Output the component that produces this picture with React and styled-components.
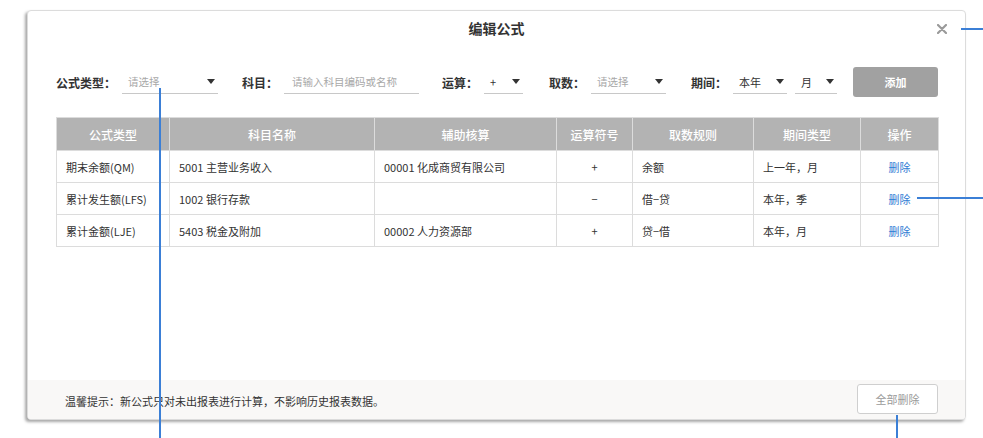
import React from 'react';
import styled, { createGlobalStyle } from 'styled-components';

const GlobalStyle = createGlobalStyle`
  html, body {
    margin: 0;
    padding: 0;
    background: #fff;
    font-family: "Noto Sans CJK SC", "Noto Sans", "Liberation Sans", sans-serif;
    color: #333;
  }
`;

const Page = styled.div`
  position: relative;
  width: 983px;
  height: 438px;
  overflow: hidden;
  padding: 10px 0 0 27px;
  box-sizing: border-box;
`;

const Dialog = styled.div`
  width: 939px;
  height: 410px;
  box-sizing: border-box;
  display: flex;
  flex-direction: column;
  background: #fff;
  border: 1px solid #dcdcdc;
  border-radius: 4px;
  box-shadow: -2px 2px 3px rgba(0, 0, 0, 0.35);
  overflow: hidden;
`;

const Header = styled.div`
  position: relative;
  height: 33px;
  display: flex;
  align-items: center;
  justify-content: center;
`;

const Title = styled.h2`
  margin: 0;
  font-size: 14px;
  font-weight: 700;
  color: #333;
`;

const Close = styled.button`
  position: absolute;
  right: 17px;
  top: 12px;
  width: 12px;
  height: 12px;
  padding: 0;
  border: 0;
  background: none;
  display: flex;
  align-items: center;
  justify-content: center;
`;

const Body = styled.div`
  flex: 1;
  padding: 23px 27px 0 28px;
`;

const FilterRow = styled.div`
  display: flex;
  align-items: center;
  height: 30px;
`;

const Field = styled.div`
  display: flex;
  align-items: center;
  gap: 6px;
  margin-left: ${p => p.$ml || 0}px;
`;

const Label = styled.span`
  font-size: 12px;
  font-weight: 700;
  color: #333;
  white-space: nowrap;
`;

const Select = styled.div`
  width: ${p => p.$w}px;
  height: 24px;
  box-sizing: border-box;
  display: flex;
  align-items: center;
  justify-content: space-between;
  padding: 0 3px 0 6px;
  border-bottom: 1px solid #c8c8c8;
  font-size: ${p => (p.$placeholder ? 10.5 : 11)}px;
  color: ${p => (p.$placeholder ? '#a8a8a8' : '#333')};
`;

const Input = styled.div`
  width: ${p => p.$w}px;
  height: 24px;
  box-sizing: border-box;
  display: flex;
  align-items: center;
  padding-left: 8px;
  border-bottom: 1px solid #c8c8c8;
  font-size: 10.5px;
  color: #a8a8a8;
`;

const Caret = styled.i`
  width: 0;
  height: 0;
  border-left: 4.5px solid transparent;
  border-right: 4.5px solid transparent;
  border-top: 5px solid #333;
`;

const AddButton = styled.button`
  margin-left: auto;
  width: 85px;
  height: 30px;
  border: 0;
  border-radius: 3px;
  background: #a1a1a1;
  color: #fff;
  font-family: inherit;
  font-size: 11px;
  font-weight: 700;
`;

const Table = styled.table`
  margin-top: 20px;
  width: 883px;
  border-collapse: collapse;
  table-layout: fixed;
  font-size: 11px;

  th, td {
    border: 1px solid #dcdcdc;
    white-space: nowrap;
  }

  th {
    height: 32px;
    padding: 0;
    background: #b3b3b3;
    color: #fff;
    font-weight: 500;
    font-size: 12px;
    text-align: center;
  }

  td {
    height: 31px;
    color: #333;
    padding: 0 9px;
  }
`;

const Cell = styled.td`
  && {
    text-align: ${p => p.$align || 'left'};
  }
`;

const LinkText = styled.a`
  color: #2f7bd4;
  cursor: pointer;
`;

const Footer = styled.div`
  height: 39px;
  display: flex;
  align-items: center;
  justify-content: space-between;
  padding: 0 27px 0 37px;
  background: #f9f8f7;
`;

const Tip = styled.span`
  font-size: 11px;
  color: #333;
  padding-top: 2px;
`;

const GhostButton = styled.button`
  width: 81px;
  height: 30px;
  margin-bottom: 1px;
  border: 1px solid #cfcfcf;
  border-radius: 3px;
  background: #fff;
  color: #9a9a9a;
  font-family: inherit;
  font-size: 11px;
`;

const Annotation = styled.span`
  position: absolute;
  background: #3b7fd6;
  left: ${p => p.$x}px;
  top: ${p => p.$y}px;
  width: ${p => p.$w}px;
  height: ${p => p.$h}px;
`;

const columns = [
  { title: '公式类型', width: 113 },
  { title: '科目名称', width: 205 },
  { title: '辅助核算', width: 182 },
  { title: '运算符号', width: 76 },
  { title: '取数规则', width: 121 },
  { title: '期间类型', width: 107 },
  { title: '操作', width: 78 },
];

const rows = [
  { type: '期末余额(QM)', subject: '5001 主营业务收入', aux: '00001 化成商贸有限公司', op: '+', rule: '余额', period: '上一年，月' },
  { type: '累计发生额(LFS)', subject: '1002 银行存款', aux: '', op: '−', rule: '借−贷', period: '本年，季' },
  { type: '累计金额(LJE)', subject: '5403 税金及附加', aux: ' 00002 人力资源部', op: '+', rule: '贷−借', period: '本年，月' },
];

const App = () => (
  <>
    <GlobalStyle />
    <Page>
      <Dialog>
        <Header>
          <Title>编辑公式</Title>
          <Close aria-label="关闭">
            <svg width="10" height="10" viewBox="0 0 10 10">
              <path d="M1 1L9 9M9 1L1 9" stroke="#9a9a9a" strokeWidth="2.2" strokeLinecap="round" />
            </svg>
          </Close>
        </Header>

        <Body>
          <FilterRow>
            <Field>
              <Label>公式类型：</Label>
              <Select $w={96} $placeholder>
                请选择
                <Caret />
              </Select>
            </Field>
            <Field $ml={24}>
              <Label>科目：</Label>
              <Input $w={135}>请输入科目编码或名称</Input>
            </Field>
            <Field $ml={23}>
              <Label>运算：</Label>
              <Select $w={39}>
                +
                <Caret />
              </Select>
            </Field>
            <Field $ml={26}>
              <Label>取数：</Label>
              <Select $w={75} $placeholder>
                请选择
                <Caret />
              </Select>
            </Field>
            <Field $ml={25}>
              <Label>期间：</Label>
              <Select $w={54}>
                本年
                <Caret />
              </Select>
            </Field>
            <Field $ml={8}>
              <Select $w={42}>
                月
                <Caret />
              </Select>
            </Field>
            <AddButton>添加</AddButton>
          </FilterRow>

          <Table>
            <colgroup>
              {columns.map(c => (
                <col key={c.title} style={{ width: c.width }} />
              ))}
            </colgroup>
            <thead>
              <tr>
                {columns.map(c => (
                  <th key={c.title}>{c.title}</th>
                ))}
              </tr>
            </thead>
            <tbody>
              {rows.map(r => (
                <tr key={r.type}>
                  <Cell>{r.type}</Cell>
                  <Cell>{r.subject}</Cell>
                  <Cell>{r.aux}</Cell>
                  <Cell $align="center">{r.op}</Cell>
                  <Cell>{r.rule}</Cell>
                  <Cell>{r.period}</Cell>
                  <Cell $align="center">
                    <LinkText>删除</LinkText>
                  </Cell>
                </tr>
              ))}
            </tbody>
          </Table>
        </Body>

        <Footer>
          <Tip>温馨提示：新公式只对未出报表进行计算，不影响历史报表数据。</Tip>
          <GhostButton>全部删除</GhostButton>
        </Footer>
      </Dialog>

      <Annotation $x={159} $y={88} $w={2} $h={350} />
      <Annotation $x={961} $y={28} $w={22} $h={2} />
      <Annotation $x={917} $y={197} $w={66} $h={2} />
      <Annotation $x={896} $y={415} $w={2} $h={23} />
    </Page>
  </>
);

export default App;
